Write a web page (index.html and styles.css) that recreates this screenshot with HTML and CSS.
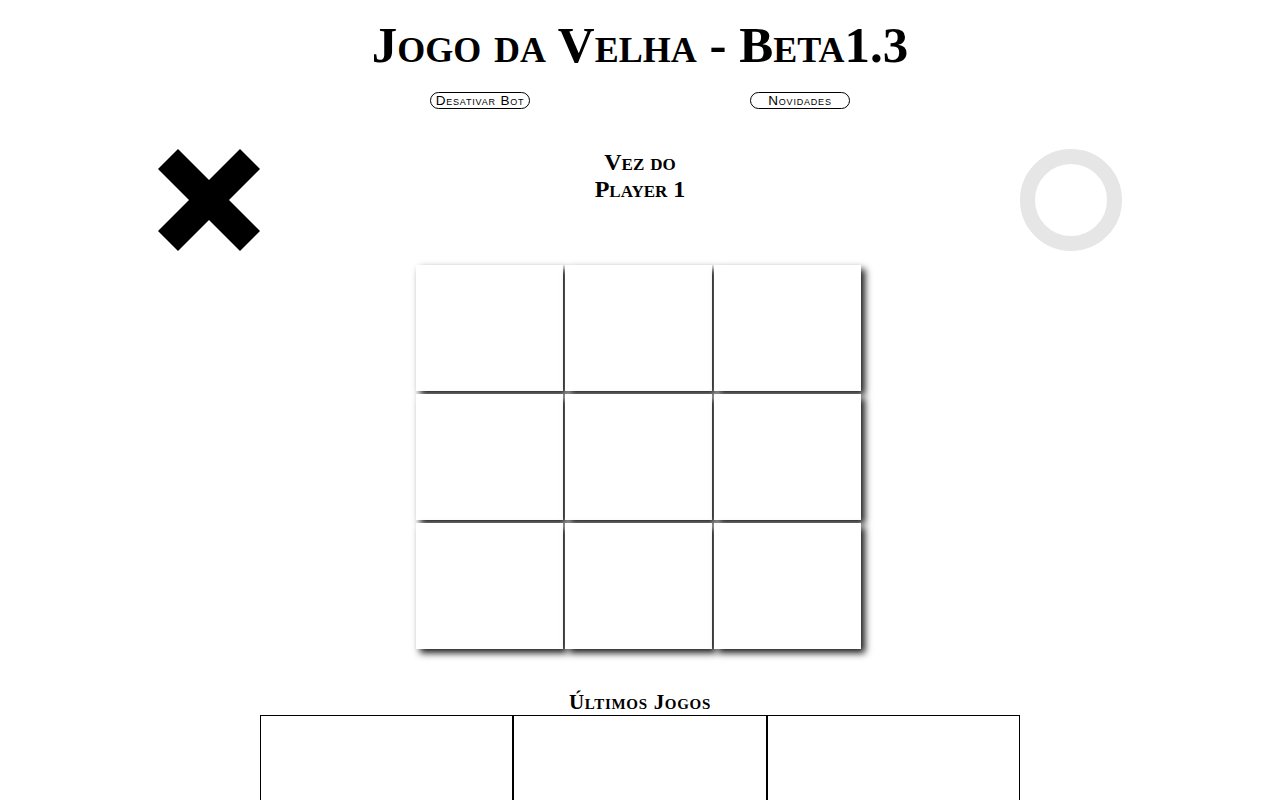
FILE: index.html
```html
<!DOCTYPE html>
<html lang="pt">
<head>
<meta charset="utf-8">
<title>Jogo da Velha</title>
<link rel="stylesheet" href="styles.css">
</head>
<body>
<h1 class="title">Jogo da Velha - Beta1.3</h1>
<div class="actions">
  <button class="btn">Desativar Bot</button>
  <button class="btn">Novidades</button>
</div>
<div class="players">
  <svg class="mark-x" width="102" height="102" viewBox="0 0 102 102" aria-hidden="true">
    <polygon points="0,20 20,0 102,82 82,102" fill="#000"/>
    <polygon points="82,0 102,20 20,102 0,82" fill="#000"/>
  </svg>
  <div class="turn">Vez do<br>Player 1</div>
  <div class="mark-o"></div>
</div>
<div class="board">
  <div class="cell"></div><div class="cell"></div><div class="cell"></div>
  <div class="cell"></div><div class="cell"></div><div class="cell"></div>
  <div class="cell"></div><div class="cell"></div><div class="cell"></div>
</div>
<h3 class="history-title">Últimos Jogos</h3>
<table class="history">
  <tr><td></td><td></td><td></td></tr>
</table>
</body>
</html>
```
FILE: styles.css
```css
html, body {
  margin: 0;
  padding: 0;
  background: #fff;
  color: #000;
  font-family: "Liberation Serif", "Times New Roman", serif;
}

.title {
  margin: 16px 0 0;
  font-size: 51px;
  font-weight: bold;
  font-variant: small-caps;
  text-align: center;
  line-height: 58px;
}

.actions {
  display: flex;
  justify-content: center;
  gap: 220px;
  margin-top: 18px;
}

.btn {
  width: 100px;
  height: 17px;
  padding: 0;
  background: #fff;
  border: 1px solid #000;
  border-radius: 9px;
  font-family: "Liberation Sans", Arial, sans-serif;
  font-size: 13.5px;
  letter-spacing: 0.8px;
  font-variant: small-caps;
  color: #000;
  line-height: 14px;
}

.players {
  width: 964px;
  margin: 38px auto 0;
  display: flex;
  justify-content: space-between;
  align-items: flex-start;
}

.mark-x {
  display: block;
  margin-top: 2px;
}

.turn {
  margin-top: 2px;
  font-size: 24px;
  font-weight: bold;
  font-variant: small-caps;
  text-align: center;
  line-height: 27px;
}

.mark-o {
  width: 102px;
  height: 102px;
  margin-top: 2px;
  box-sizing: border-box;
  border: 15px solid #e6e6e6;
  border-radius: 50%;
}

.board {
  width: 446px;
  margin: 14px 0 0 calc(50% - 224px);
  display: grid;
  grid-template-columns: repeat(3, 147px);
  grid-auto-rows: 126px;
  gap: 3px 2px;
}

.cell {
  background: #fff;
  box-shadow: 4px 4px 7px rgba(0, 0, 0, 0.9);
}

.history-title {
  margin: 42px 0 0;
  font-size: 21px;
  letter-spacing: 0.7px;
  font-weight: bold;
  font-variant: small-caps;
  text-align: center;
  line-height: 23px;
}

.history {
  width: 760px;
  margin: 1px auto 0;
  border-collapse: separate;
  border-spacing: 0;
}

.history td {
  border: 1px solid #000;
  height: 120px;
  width: 33.33%;
}
```
